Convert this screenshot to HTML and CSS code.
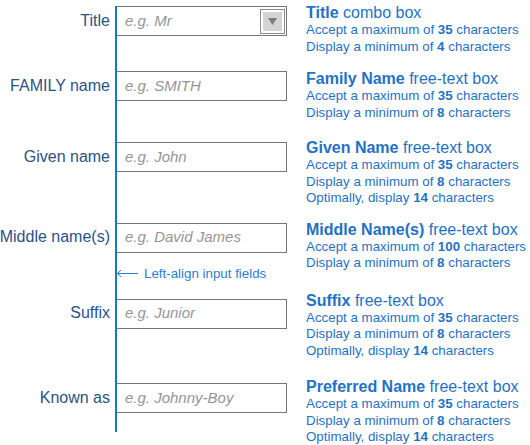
FILE: index.html
```html
<!DOCTYPE html>
<html lang="en">
<head>
<meta charset="utf-8">
<title>Name fields</title>
<link rel="stylesheet" href="styles.css">
</head>
<body>
<div class="sheet">
  <section class="entry e1">
    <div class="field">
      <label class="label" for="f-title">Title</label>
      <div class="slot">
        <div class="box">
          <input id="f-title" placeholder="e.g. Mr">
          <span class="drop"><svg width="9" height="7" viewBox="0 0 9 7"><polygon points="0,0 9,0 4.5,7" fill="#7c7c7c"/></svg></span>
        </div>
      </div>
    </div>
    <div class="desc">
      <h2><b>Title</b> combo box</h2>
      <p>Accept a maximum of <b>35</b> characters</p>
      <p>Display a minimum of <b>4</b> characters</p>
    </div>
  </section>

  <section class="entry e2">
    <div class="field">
      <label class="label" for="f-family">FAMILY name</label>
      <div class="slot">
        <div class="box"><input id="f-family" placeholder="e.g. SMITH"></div>
      </div>
    </div>
    <div class="desc">
      <h2><b>Family Name</b> free-text box</h2>
      <p>Accept a maximum of <b>35</b> characters</p>
      <p>Display a minimum of <b>8</b> characters</p>
    </div>
  </section>

  <section class="entry e3">
    <div class="field">
      <label class="label" for="f-given">Given name</label>
      <div class="slot">
        <div class="box"><input id="f-given" placeholder="e.g. John"></div>
      </div>
    </div>
    <div class="desc">
      <h2><b>Given Name</b> free-text box</h2>
      <p>Accept a maximum of <b>35</b> characters</p>
      <p>Display a minimum of <b>8</b> characters</p>
      <p>Optimally, display <b>14</b> characters</p>
    </div>
  </section>

  <section class="entry e4">
    <div class="field">
      <label class="label" for="f-middle">Middle name(s)</label>
      <div class="slot">
        <div class="box"><input id="f-middle" placeholder="e.g. David James"></div>
        <div class="note">
          <svg width="21" height="9" viewBox="0 0 21 9"><path d="M0.5 4.5H21M4 1L0.5 4.5L4 8" fill="none" stroke="#2a7fd0" stroke-width="1"/></svg>
          <span>Left-align input fields</span>
        </div>
      </div>
    </div>
    <div class="desc">
      <h2><b>Middle Name(s)</b> free-text box</h2>
      <p>Accept a maximum of <b>100</b> characters</p>
      <p>Display a minimum of <b>8</b> characters</p>
    </div>
  </section>

  <section class="entry e5">
    <div class="field">
      <label class="label" for="f-suffix">Suffix</label>
      <div class="slot">
        <div class="box"><input id="f-suffix" placeholder="e.g. Junior"></div>
      </div>
    </div>
    <div class="desc">
      <h2><b>Suffix</b> free-text box</h2>
      <p>Accept a maximum of <b>35</b> characters</p>
      <p>Display a minimum of <b>8</b> characters</p>
      <p>Optimally, display <b>14</b> characters</p>
    </div>
  </section>

  <section class="entry e6">
    <div class="field">
      <label class="label" for="f-known">Known as</label>
      <div class="slot">
        <div class="box"><input id="f-known" placeholder="e.g. Johnny-Boy"></div>
      </div>
    </div>
    <div class="desc">
      <h2><b>Preferred Name</b> free-text box</h2>
      <p>Accept a maximum of <b>35</b> characters</p>
      <p>Display a minimum of <b>8</b> characters</p>
      <p>Optimally, display <b>14</b> characters</p>
    </div>
  </section>
</div>
</body>
</html>
```

FILE: styles.css
```css
* { box-sizing: border-box; }

body {
  margin: 0;
  background: #fff;
  font-family: "Liberation Sans", Arial, sans-serif;
}

.sheet {
  display: flex;
  flex-direction: column;
  min-height: 445px;
  background: linear-gradient(#1178d3, #1178d3) no-repeat 115px 6px / 2px 426px;
}

.entry {
  display: flex;
  align-items: flex-start;
}

.field {
  display: flex;
  align-items: flex-start;
}

.label {
  width: 110px;
  margin-right: 5px;
  height: 30px;
  padding-bottom: 1px;
  display: flex;
  align-items: center;
  justify-content: flex-end;
  font-size: 16px;
  color: #2b5288;
  white-space: nowrap;
}

.slot {
  width: 172px;
  padding-left: 2px;
}

.box {
  display: flex;
  align-items: center;
  width: 170px;
  height: 30px;
  border: 1px solid #767676;
  border-left: 0;
}

.box input {
  flex: 1;
  min-width: 0;
  height: 100%;
  border: 0;
  margin: 0;
  padding: 0 0 2px 8px;
  background: transparent;
  font: italic 15px "Liberation Sans", Arial, sans-serif;
  color: #333;
  outline: none;
}

.box input::placeholder {
  color: #959595;
  opacity: 1;
}

.drop {
  flex: none;
  width: 25px;
  height: 25px;
  margin-right: 1px;
  border: 1px solid #8a8a8a;
  padding: 2px;
  background: #d4d4d4 content-box;
  display: flex;
  align-items: center;
  justify-content: center;
}

.drop svg { display: block; }

.note {
  display: flex;
  align-items: center;
  gap: 6px;
  margin-top: 13px;
  height: 15px;
  font-size: 13.33px;
  color: #2a7fd0;
  white-space: nowrap;
}

.note svg { display: block; flex: none; }

.desc {
  margin-left: 19px;
  color: #1f72c4;
  white-space: nowrap;
}

.desc h2 {
  margin: 0;
  font-size: 16px;
  line-height: 19px;
  font-weight: normal;
}

.desc p {
  margin: 0;
  font-size: 13.33px;
  line-height: 16.5px;
}

.desc b { font-weight: bold; }

.e1 { margin-top: 3px; }
.e1 .field { padding-top: 3px; }
.e2 { margin-top: 14px; }
.e2 .field { padding-top: 2px; }
.e3 { margin-top: 17px; }
.e3 .field { padding-top: 4px; }
.e4 { margin-top: 13px; }
.e4 .field { padding-top: 3px; }
.e5 { margin-top: 10px; }
.e5 .field { padding-top: 8px; }
.e6 { margin-top: 18px; }
.e6 .field { padding-top: 6px; }
```
